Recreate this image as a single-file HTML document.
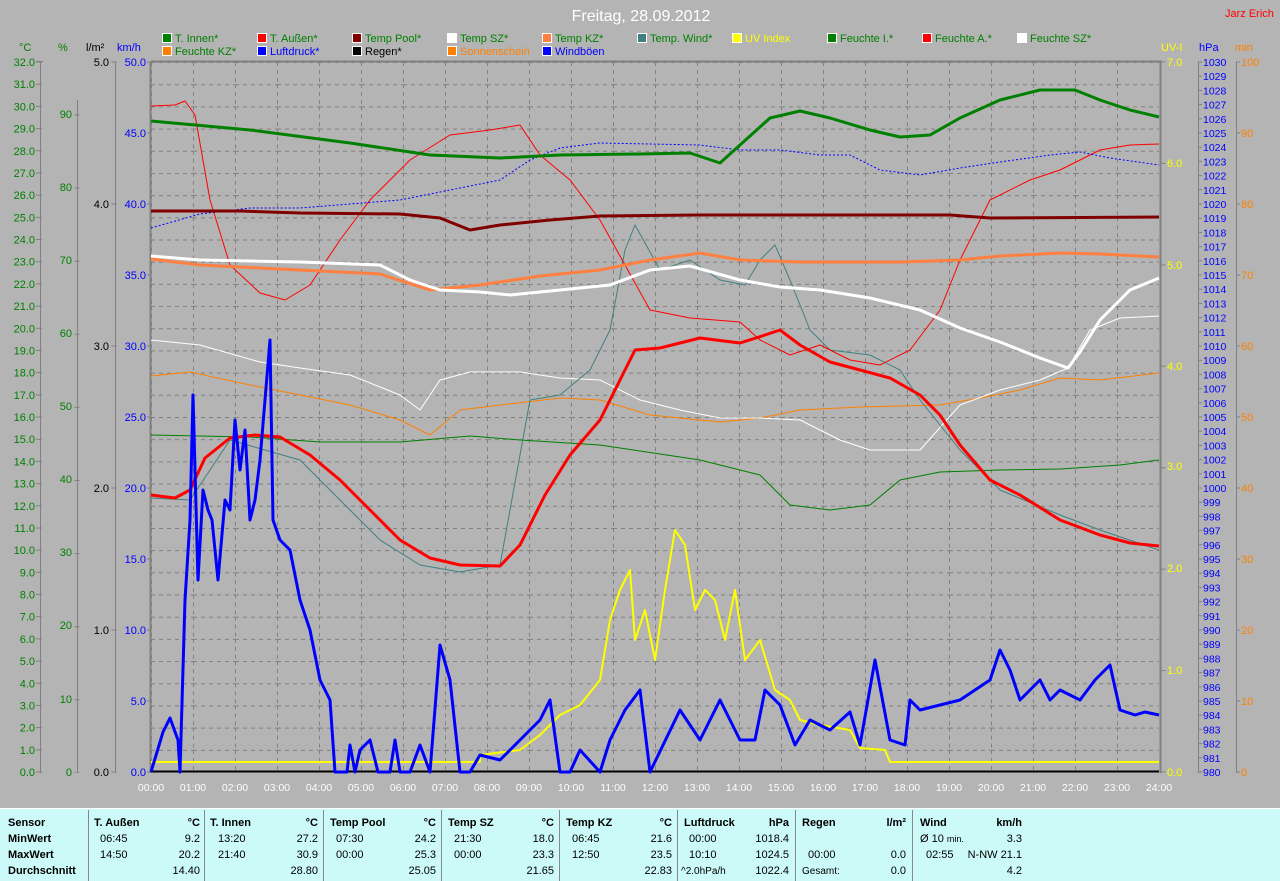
<!DOCTYPE html>
<html><head><meta charset="utf-8"><style>
html,body{margin:0;padding:0;background:#b4b4b4;}
svg{display:block;font-family:"Liberation Sans",sans-serif;font-size:11px;}
.tb{font-weight:bold;}
</style></head><body>
<svg width="1280" height="881" viewBox="0 0 1280 881" xmlns="http://www.w3.org/2000/svg">
<defs>
<pattern id="g" x="151" y="62" width="42" height="22.1875" patternUnits="userSpaceOnUse">
<line x1="0" y1="0.5" x2="42" y2="0.5" stroke="#808080" stroke-dasharray="4 4"/>
<line x1="0.5" y1="0" x2="0.5" y2="22.1875" stroke="#808080" stroke-dasharray="4 4"/>
</pattern>
</defs>
<rect width="1280" height="881" fill="#b4b4b4"/>
<rect x="151" y="62" width="1008" height="710" fill="url(#g)"/>
<!-- plot frame -->
<line x1="151" y1="61.5" x2="1162" y2="61.5" stroke="#808080" stroke-width="2"/>
<line x1="150.5" y1="62" x2="150.5" y2="773" stroke="#808080" stroke-width="2"/>
<line x1="1160.5" y1="62" x2="1160.5" y2="773" stroke="#808080" stroke-width="2"/>
<!-- title -->
<text x="641" y="21" fill="#fff" font-size="16" text-anchor="middle">Freitag, 28.09.2012</text>
<text x="1225" y="17" fill="#f00">Jarz Erich</text>
<!-- legend -->
<g stroke="#fff" stroke-width="1">
<rect x="162.5" y="33.5" width="9" height="9" fill="#008000"/><rect x="257.5" y="33.5" width="9" height="9" fill="#f00"/><rect x="352.5" y="33.5" width="9" height="9" fill="#800000"/><rect x="447.5" y="33.5" width="9" height="9" fill="#fff"/><rect x="542.5" y="33.5" width="9" height="9" fill="#ff8040"/><rect x="637.5" y="33.5" width="9" height="9" fill="#408080"/><rect x="732.5" y="33.5" width="9" height="9" fill="#ff0"/><rect x="827.5" y="33.5" width="9" height="9" fill="#008000"/><rect x="922.5" y="33.5" width="9" height="9" fill="#f00"/><rect x="1017.5" y="33.5" width="9" height="9" fill="#fff"/>
<rect x="162.5" y="46.5" width="9" height="9" fill="#ff8000"/><rect x="257.5" y="46.5" width="9" height="9" fill="#00f"/><rect x="352.5" y="46.5" width="9" height="9" fill="#000"/><rect x="447.5" y="46.5" width="9" height="9" fill="#ff8000"/><rect x="542.5" y="46.5" width="9" height="9" fill="#00f"/>
</g>
<g fill="#008000">
<text x="175" y="42">T. Innen*</text><text x="270" y="42" fill="#008000">T. Außen*</text><text x="365" y="42">Temp Pool*</text><text x="460" y="42">Temp SZ*</text><text x="555" y="42">Temp KZ*</text><text x="650" y="42">Temp. Wind*</text><text x="745" y="42" fill="#ff0">UV Index</text><text x="840" y="42">Feuchte I.*</text><text x="935" y="42">Feuchte A.*</text><text x="1030" y="42">Feuchte SZ*</text>
<text x="175" y="55">Feuchte KZ*</text><text x="270" y="55" fill="#00f">Luftdruck*</text><text x="365" y="55" fill="#000">Regen*</text><text x="460" y="55" fill="#ff8000">Sonnenschein</text><text x="555" y="55" fill="#00f">Windböen</text>
</g>
<!-- axis headers -->
<text x="19" y="51" fill="#008000">°C</text><text x="58" y="51" fill="#008000">%</text><text x="86" y="51" fill="#000">l/m²</text><text x="117" y="51" fill="#00f">km/h</text>
<text x="1161" y="51" fill="#ff0">UV-I</text><text x="1199" y="51" fill="#00f">hPa</text><text x="1235" y="51" fill="#ff8000">min</text>
<!-- axis lines -->
<g stroke="#808080">
<line x1="40.5" y1="62" x2="40.5" y2="773"/><line x1="77.5" y1="100" x2="77.5" y2="773"/><line x1="115.5" y1="62" x2="115.5" y2="773"/>
<line x1="1198.5" y1="62" x2="1198.5" y2="773"/><line x1="1236.5" y1="62" x2="1236.5" y2="773"/>
<line x1="36" y1="61.5" x2="43" y2="61.5" stroke-width="1"/>
</g>
<g stroke="#808080" fill="none">
<line x1="39" y1="61.5" x2="39" y2="773" stroke-width="6" stroke-dasharray="1 21.1875"/>
<line x1="77" y1="114.5" x2="77" y2="773" stroke-width="5" stroke-dasharray="1 72.1"/>
<line x1="114" y1="61.5" x2="114" y2="773" stroke-width="5" stroke-dasharray="1 141"/>
<line x1="149" y1="61.5" x2="149" y2="773" stroke-width="4" stroke-dasharray="1 70"/>
<line x1="1163" y1="61.5" x2="1163" y2="773" stroke-width="5" stroke-dasharray="1 100.43"/>
<line x1="1200" y1="61.5" x2="1200" y2="773" stroke-width="4" stroke-dasharray="1 13.2"/>
<line x1="1238" y1="61.5" x2="1238" y2="773" stroke-width="4" stroke-dasharray="1 70"/>
</g>
<!-- °C labels -->
<g fill="#008000" text-anchor="end">
<text x="35" y="66">32.0</text><text x="35" y="88.2">31.0</text><text x="35" y="110.4">30.0</text><text x="35" y="132.6">29.0</text><text x="35" y="154.8">28.0</text><text x="35" y="176.9">27.0</text><text x="35" y="199.1">26.0</text><text x="35" y="221.3">25.0</text><text x="35" y="243.5">24.0</text><text x="35" y="265.7">23.0</text><text x="35" y="287.9">22.0</text><text x="35" y="310.1">21.0</text><text x="35" y="332.3">20.0</text><text x="35" y="354.4">19.0</text><text x="35" y="376.6">18.0</text><text x="35" y="398.8">17.0</text><text x="35" y="421">16.0</text><text x="35" y="443.2">15.0</text><text x="35" y="465.4">14.0</text><text x="35" y="487.6">13.0</text><text x="35" y="509.8">12.0</text><text x="35" y="531.9">11.0</text><text x="35" y="554.1">10.0</text><text x="35" y="576.3">9.0</text><text x="35" y="598.5">8.0</text><text x="35" y="620.7">7.0</text><text x="35" y="642.9">6.0</text><text x="35" y="665.1">5.0</text><text x="35" y="687.3">4.0</text><text x="35" y="709.4">3.0</text><text x="35" y="731.6">2.0</text><text x="35" y="753.8">1.0</text><text x="35" y="776">0.0</text>
<text x="72" y="118">90</text><text x="72" y="191">80</text><text x="72" y="264">70</text><text x="72" y="337">60</text><text x="72" y="410">50</text><text x="72" y="483">40</text><text x="72" y="556">30</text><text x="72" y="629">20</text><text x="72" y="703">10</text><text x="72" y="776">0</text>
</g>
<g fill="#000" text-anchor="end">
<text x="109" y="66">5.0</text><text x="109" y="208">4.0</text><text x="109" y="350">3.0</text><text x="109" y="492">2.0</text><text x="109" y="634">1.0</text><text x="109" y="776">0.0</text>
</g>
<g fill="#00f" text-anchor="end">
<text x="146" y="66">50.0</text><text x="146" y="137">45.0</text><text x="146" y="208">40.0</text><text x="146" y="279">35.0</text><text x="146" y="350">30.0</text><text x="146" y="421">25.0</text><text x="146" y="492">20.0</text><text x="146" y="563">15.0</text><text x="146" y="634">10.0</text><text x="146" y="705">5.0</text><text x="146" y="776">0.0</text>
</g>
<g fill="#ff0">
<text x="1167" y="66">7.0</text><text x="1167" y="167">6.0</text><text x="1167" y="269">5.0</text><text x="1167" y="370">4.0</text><text x="1167" y="470">3.0</text><text x="1167" y="572">2.0</text><text x="1167" y="674">1.0</text><text x="1167" y="776">0.0</text>
</g>
<g fill="#ff8000">
<text x="1241" y="66">100</text><text x="1241" y="137">90</text><text x="1241" y="208">80</text><text x="1241" y="279">70</text><text x="1241" y="350">60</text><text x="1241" y="421">50</text><text x="1241" y="492">40</text><text x="1241" y="563">30</text><text x="1241" y="634">20</text><text x="1241" y="705">10</text><text x="1241" y="776">0</text>
</g>
<g fill="#00f" font-size="10.5">
<text x="1203" y="66">1030</text><text x="1203" y="80.2">1029</text><text x="1203" y="94.4">1028</text><text x="1203" y="108.6">1027</text><text x="1203" y="122.8">1026</text><text x="1203" y="137">1025</text><text x="1203" y="151.2">1024</text><text x="1203" y="165.4">1023</text><text x="1203" y="179.6">1022</text><text x="1203" y="193.8">1021</text><text x="1203" y="208">1020</text><text x="1203" y="222.2">1019</text><text x="1203" y="236.4">1018</text><text x="1203" y="250.6">1017</text><text x="1203" y="264.8">1016</text><text x="1203" y="279">1015</text><text x="1203" y="293.2">1014</text><text x="1203" y="307.4">1013</text><text x="1203" y="321.6">1012</text><text x="1203" y="335.8">1011</text><text x="1203" y="350">1010</text><text x="1203" y="364.2">1009</text><text x="1203" y="378.4">1008</text><text x="1203" y="392.6">1007</text><text x="1203" y="406.8">1006</text><text x="1203" y="421">1005</text><text x="1203" y="435.2">1004</text><text x="1203" y="449.4">1003</text><text x="1203" y="463.6">1002</text><text x="1203" y="477.8">1001</text><text x="1203" y="492">1000</text><text x="1203" y="506.2">999</text><text x="1203" y="520.4">998</text><text x="1203" y="534.6">997</text><text x="1203" y="548.8">996</text><text x="1203" y="563">995</text><text x="1203" y="577.2">994</text><text x="1203" y="591.4">993</text><text x="1203" y="605.6">992</text><text x="1203" y="619.8">991</text><text x="1203" y="634">990</text><text x="1203" y="648.2">989</text><text x="1203" y="662.4">988</text><text x="1203" y="676.6">987</text><text x="1203" y="690.8">986</text><text x="1203" y="705">985</text><text x="1203" y="719.2">984</text><text x="1203" y="733.4">983</text><text x="1203" y="747.6">982</text><text x="1203" y="761.8">981</text><text x="1203" y="776">980</text>
</g>
<!-- x labels -->
<g fill="#fff" text-anchor="middle" font-size="10.5">
<text x="151" y="791">00:00</text><text x="193" y="791">01:00</text><text x="235" y="791">02:00</text><text x="277" y="791">03:00</text><text x="319" y="791">04:00</text><text x="361" y="791">05:00</text><text x="403" y="791">06:00</text><text x="445" y="791">07:00</text><text x="487" y="791">08:00</text><text x="529" y="791">09:00</text><text x="571" y="791">10:00</text><text x="613" y="791">11:00</text><text x="655" y="791">12:00</text><text x="697" y="791">13:00</text><text x="739" y="791">14:00</text><text x="781" y="791">15:00</text><text x="823" y="791">16:00</text><text x="865" y="791">17:00</text><text x="907" y="791">18:00</text><text x="949" y="791">19:00</text><text x="991" y="791">20:00</text><text x="1033" y="791">21:00</text><text x="1075" y="791">22:00</text><text x="1117" y="791">23:00</text><text x="1159" y="791">24:00</text>
</g>
<!-- curves -->
<g fill="none" stroke-linejoin="round">
<polyline stroke="#008000" stroke-width="1" points="151,435 250,437 320,442 400,442 470,436 520,440 600,445 700,460 760,475 790,505 830,510 870,505 900,480 940,472 1000,470 1060,469 1120,465 1159,460"/>
<polyline stroke="#ff8000" stroke-width="1" points="151,376 190,372 250,385 300,395 350,405 400,420 430,435 460,410 500,405 560,398 600,400 650,415 720,422 760,418 800,410 860,407 940,405 980,398 1020,390 1060,378 1100,380 1159,373"/>
<polyline stroke="#fff" stroke-width="1" points="151,340 200,345 260,362 300,368 350,375 400,395 420,410 440,380 470,372 520,372 560,378 600,380 640,400 680,410 720,418 760,418 800,420 840,440 870,450 920,450 960,405 1000,390 1040,380 1068,368 1090,330 1120,318 1159,316"/>
<polyline stroke="#408080" stroke-width="1" points="151,498 190,500 230,440 300,460 350,510 380,540 420,565 460,572 500,565 510,510 530,400 560,395 590,370 610,330 625,250 635,225 660,270 690,260 720,280 745,285 760,260 775,245 790,280 810,330 830,350 870,355 900,370 920,400 960,450 1000,490 1060,515 1100,530 1159,550"/>
<polyline stroke="#f00" stroke-width="1" points="151,106 175,105 185,101 195,115 210,200 230,265 260,293 285,300 310,285 340,240 370,200 410,160 450,135 490,130 520,125 540,155 570,180 600,220 625,265 650,310 690,318 740,322 760,340 790,355 820,345 850,360 880,365 910,350 940,310 960,260 990,200 1030,180 1060,170 1100,150 1130,145 1159,144"/>
<polyline stroke="#00f" stroke-width="1" stroke-dasharray="2 2" points="151,228 200,214 250,208 300,208 400,200 450,190 500,180 530,160 560,148 600,143 700,145 740,150 780,150 820,155 850,155 880,170 920,175 960,168 1000,162 1050,155 1080,152 1110,158 1159,165"/>
<polyline stroke="#800000" stroke-width="3" points="151,211 240,211 300,213 400,214 440,218 470,230 500,225 550,220 600,216 700,215 850,215 950,215 990,218 1159,217"/>
<polyline stroke="#ff8040" stroke-width="3" points="151,259 200,265 300,270 380,274 430,290 480,285 540,276 600,270 650,260 700,253 740,260 800,262 900,262 960,260 1000,256 1060,253 1100,254 1159,257"/>
<polyline stroke="#fff" stroke-width="3" points="151,256 200,260 300,262 380,265 410,280 440,290 480,292 510,295 560,290 610,285 650,270 690,266 740,280 780,287 820,290 870,298 920,310 960,328 1000,342 1040,358 1068,368 1080,352 1100,320 1130,290 1159,278"/>
<polyline stroke="#008000" stroke-width="3" points="151,121 250,130 350,143 430,155 500,158 560,155 640,154 690,153 720,163 740,145 770,118 800,111 830,118 870,130 900,137 930,135 960,118 1000,100 1040,90 1075,90 1100,100 1130,110 1159,117"/>
<polyline stroke="#f00" stroke-width="3" points="151,495 175,498 190,490 205,458 230,438 255,435 280,437 310,455 340,480 370,510 400,540 430,558 460,565 500,566 520,545 545,495 570,455 600,420 620,380 635,350 660,348 700,338 740,343 765,335 780,330 800,345 830,362 860,370 890,378 920,395 940,415 960,445 990,480 1020,495 1060,520 1100,535 1130,543 1159,546"/>
<line x1="151" y1="771.5" x2="1159" y2="771.5" stroke="#000" stroke-width="2"/>
<polyline stroke="#ff0" stroke-width="2" points="151,762 480,762 480,755 520,750 540,735 560,715 580,705 600,680 610,620 620,590 630,570 635,640 645,610 655,660 665,590 675,530 685,545 695,610 705,590 715,600 725,640 735,590 745,660 760,640 775,690 790,700 800,720 820,725 850,730 860,748 885,750 890,762 1159,762"/>
<polyline stroke="#00f" stroke-width="3" points="151,772 163,732 170,718 178,740 180,772 185,600 190,520 193,395 198,580 203,490 208,510 212,520 218,580 225,500 230,510 235,420 240,470 245,430 250,520 255,500 260,460 265,400 270,340 273,520 280,540 290,550 300,600 310,630 320,680 330,700 335,772 347,772 350,745 355,772 360,750 370,740 378,772 390,772 395,740 400,772 410,772 420,745 430,772 440,645 450,680 460,772 470,772 480,755 500,760 520,740 540,720 550,700 560,772 570,772 580,750 600,772 610,740 625,710 640,690 650,772 680,710 700,740 720,700 740,740 755,740 765,690 780,705 795,745 810,720 830,730 850,712 860,745 875,660 890,740 905,745 910,700 920,710 940,705 960,700 990,680 1000,650 1010,670 1020,700 1040,680 1050,700 1060,690 1080,700 1095,680 1110,665 1120,710 1135,715 1145,712 1159,715"/>
</g>
<!-- table -->
<rect x="0" y="808" width="1280" height="73" fill="#ccfaf8"/>
<line x1="0" y1="808.5" x2="1280" y2="808.5" stroke="#fff"/>
<g stroke="#888"><line x1="88.5" y1="810" x2="88.5" y2="881"/><line x1="204.5" y1="810" x2="204.5" y2="881"/><line x1="323.5" y1="810" x2="323.5" y2="881"/><line x1="441.5" y1="810" x2="441.5" y2="881"/><line x1="559.5" y1="810" x2="559.5" y2="881"/><line x1="677.5" y1="810" x2="677.5" y2="881"/><line x1="795.5" y1="810" x2="795.5" y2="881"/><line x1="912.5" y1="810" x2="912.5" y2="881"/></g>
<g fill="#000" font-size="11">
<g class="tb"><text x="8" y="826">Sensor</text><text x="8" y="842">MinWert</text><text x="8" y="858">MaxWert</text><text x="8" y="874">Durchschnitt</text>
<text x="94" y="826">T. Außen</text><text x="210" y="826">T. Innen</text><text x="330" y="826">Temp Pool</text><text x="448" y="826">Temp SZ</text><text x="566" y="826">Temp KZ</text><text x="684" y="826">Luftdruck</text><text x="802" y="826">Regen</text><text x="920" y="826">Wind</text>
<g text-anchor="end"><text x="200" y="826">°C</text><text x="318" y="826">°C</text><text x="436" y="826">°C</text><text x="554" y="826">°C</text><text x="672" y="826">°C</text><text x="789" y="826">hPa</text><text x="906" y="826">l/m²</text><text x="1022" y="826">km/h</text></g></g>
<text x="100" y="842">06:45</text><text x="100" y="858">14:50</text>
<text x="218" y="842">13:20</text><text x="218" y="858">21:40</text>
<text x="336" y="842">07:30</text><text x="336" y="858">00:00</text>
<text x="454" y="842">21:30</text><text x="454" y="858">00:00</text>
<text x="572" y="842">06:45</text><text x="572" y="858">12:50</text>
<text x="689" y="842">00:00</text><text x="689" y="858">10:10</text><text x="681" y="874" font-size="10">^2.0hPa/h</text>
<text x="808" y="858">00:00</text><text x="802" y="874" font-size="10">Gesamt:</text>
<text x="920" y="842">Ø 10 <tspan font-size="9">min.</tspan></text><text x="926" y="858">02:55</text>
<g text-anchor="end">
<text x="200" y="842">9.2</text><text x="200" y="858">20.2</text><text x="200" y="874">14.40</text>
<text x="318" y="842">27.2</text><text x="318" y="858">30.9</text><text x="318" y="874">28.80</text>
<text x="436" y="842">24.2</text><text x="436" y="858">25.3</text><text x="436" y="874">25.05</text>
<text x="554" y="842">18.0</text><text x="554" y="858">23.3</text><text x="554" y="874">21.65</text>
<text x="672" y="842">21.6</text><text x="672" y="858">23.5</text><text x="672" y="874">22.83</text>
<text x="789" y="842">1018.4</text><text x="789" y="858">1024.5</text><text x="789" y="874">1022.4</text>
<text x="906" y="858">0.0</text><text x="906" y="874">0.0</text>
<text x="1022" y="842">3.3</text><text x="1022" y="858">N-NW 21.1</text><text x="1022" y="874">4.2</text>
</g></g>
</svg>
</body></html>
